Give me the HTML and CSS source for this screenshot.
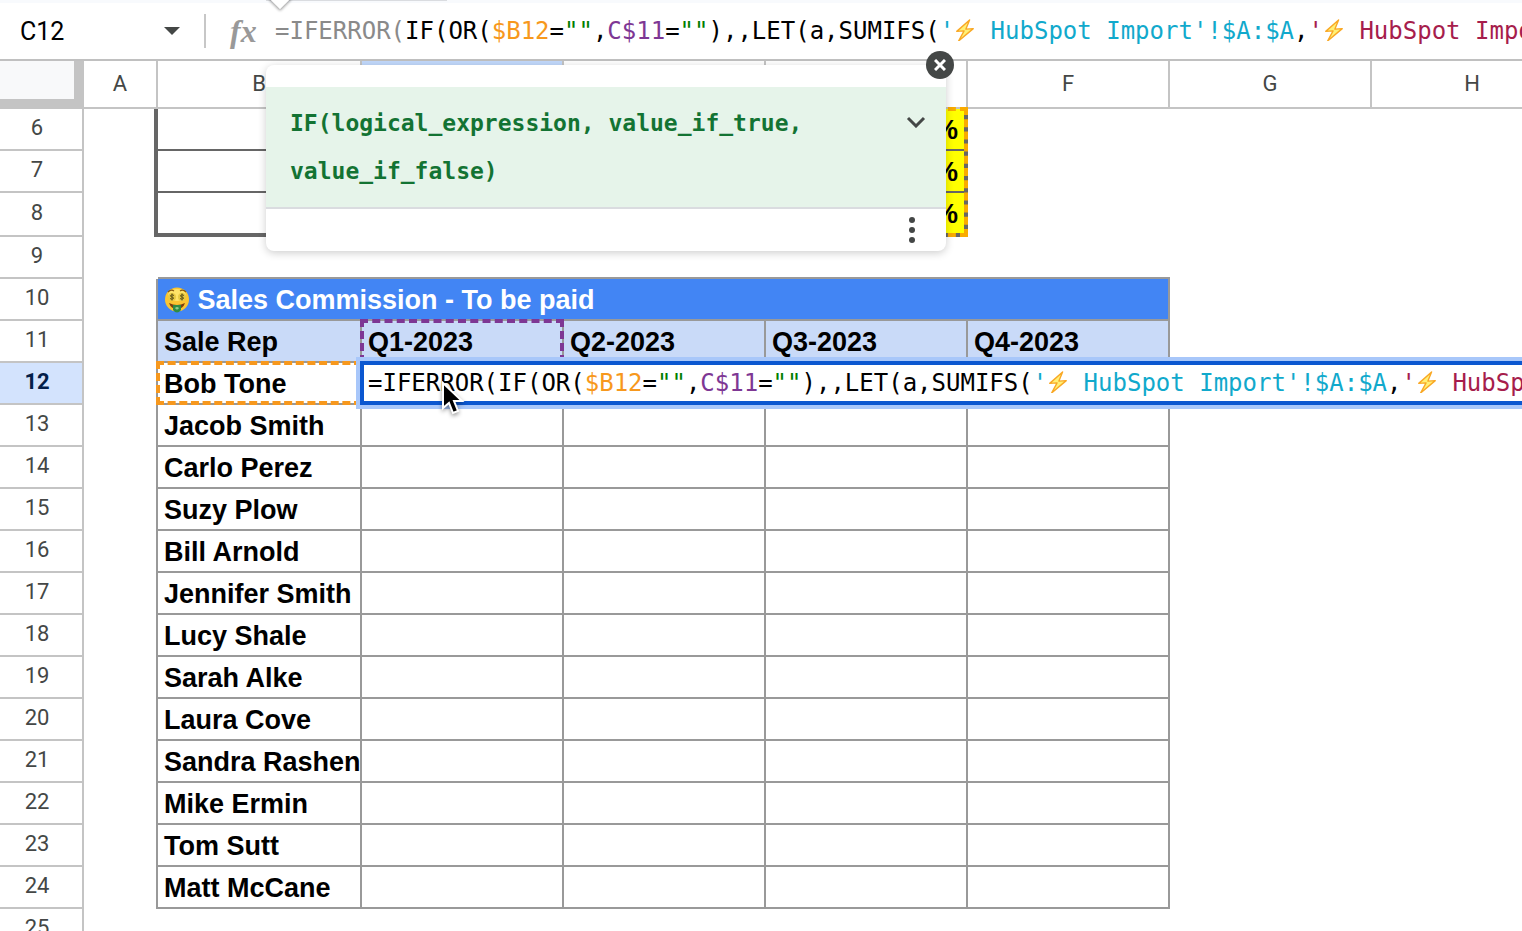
FILE: index.html
```html
<!DOCTYPE html>
<html lang="en">
<head>
    <meta charset="UTF-8">
    <meta name="viewport" content="width=device-width, initial-scale=1.0">
    <title>Sales Commission</title>
    <link rel="stylesheet" href="styles.css">
</head>
<body>
    <svg class="defs" aria-hidden="true">
        <symbol id="bolt" viewBox="0 0 24 24">
            <path d="M17 1 L3 13.500 L11 13 L5 24 L21 10.500 L13 11 Z" fill="#fff176" stroke="#f9a825" stroke-width="1.500" stroke-linejoin="round"/>
        </symbol>
    </svg>

    <div class="formula-bar">
        <input class="name-box" type="text" value="C12" aria-label="Name box">
        <button class="name-arrow" aria-label="Named ranges"></button>
        <span class="divider"></span>
        <i class="fx">fx</i>
        <div class="formula" contenteditable="true" spellcheck="false" role="textbox" aria-label="Formula"><span class="dim">=IFERROR(</span>IF(OR(<span class="ref-orange">$B12</span>=<span class="str">""</span>,<span class="ref-purple">C$11</span>=<span class="str">""</span>),,LET(a,SUMIFS(<span class="ref-cyan">'<svg class="bolt"><use href="#bolt"/></svg> HubSpot Import'!$A:$A</span>,<span class="ref-red">'<svg class="bolt"><use href="#bolt"/></svg> HubSpot Import'</span></div>
    </div>

    <div class="sheet">
        <table>
            <colgroup>
                <col class="col-num">
                <col class="col-a">
                <col class="col-b">
                <col span="6">
            </colgroup>
            <thead>
                <tr>
                    <th class="corner"></th>
                    <th>A</th>
                    <th>B</th>
                    <th class="active">C</th>
                    <th>D</th>
                    <th>E</th>
                    <th>F</th>
                    <th>G</th>
                    <th>H</th>
                </tr>
            </thead>
            <tbody class="rates">
                <tr><th>6</th><td></td><td></td><td></td><td></td><td class="rate">%<span class="range range-rates"></span></td></tr>
                <tr><th>7</th><td></td><td></td><td></td><td></td><td class="rate">%</td></tr>
                <tr class="last"><th>8</th><td></td><td></td><td></td><td></td><td class="rate">%</td></tr>
            </tbody>
            <tbody class="spacer">
                <tr><th>9</th><td></td><td></td><td></td><td></td><td></td><td></td></tr>
            </tbody>
            <tbody class="commission">
                <tr>
                    <th>10</th>
                    <td></td>
                    <td class="title" colspan="5"><svg class="face" viewBox="0 0 26 26" aria-hidden="true">
                        <circle cx="13" cy="12.500" r="12" fill="#fbc531"/>
                        <ellipse cx="13" cy="8" rx="9" ry="6" fill="#ffe368"/>
                        <path d="M4 5 Q7 2 10 4 M16 4 Q19 2 22 5" fill="none" stroke="#8a5a12" stroke-width="1.200"/>
                        <circle cx="8" cy="10" r="4" fill="#e8c944"/>
                        <circle cx="18" cy="10" r="4" fill="#e8c944"/>
                        <path d="M10 8.500 Q8 7 6.500 8.500 Q6.500 10 8 10 Q9.800 10.300 9.500 11.500 Q8 13 6 11.500 M8 6.500 V13.500 M20 8.500 Q18 7 16.500 8.500 Q16.500 10 18 10 Q19.800 10.300 19.500 11.500 Q18 13 16 11.500 M18 6.500 V13.500" fill="none" stroke="#5f5318" stroke-width="1"/>
                        <path d="M5 16 Q13 20 21 16 Q19 22 13 22 Q7 22 5 16 Z" fill="#7b3f10"/>
                        <path d="M9 18 H17 V23 Q13 28 9 23 Z" fill="#2e8b45"/>
                        <path d="M11 21 Q13 19 15 21 Q13 24 11 21" fill="#8fce8f"/>
                    </svg> Sales Commission - To be paid</td>
                </tr>
                <tr class="heads">
                    <th>11</th>
                    <td></td>
                    <td>Sale Rep</td>
                    <td>Q1-2023<span class="range range-purple"></span></td>
                    <td>Q2-2023</td>
                    <td>Q3-2023</td>
                    <td>Q4-2023</td>
                </tr>
                <tr>
                    <th class="active">12</th>
                    <td></td>
                    <td>Bob Tone<span class="range range-orange"></span></td>
                    <td><div class="editor" contenteditable="true" spellcheck="false" role="textbox" aria-label="C12">=IFERROR(IF(OR(<span class="ref-orange">$B12</span>=<span class="str">""</span>,<span class="ref-purple">C$11</span>=<span class="str">""</span>),,LET(a,SUMIFS(<span class="ref-cyan">'<svg class="bolt"><use href="#bolt"/></svg> HubSpot Import'!$A:$A</span>,<span class="ref-red">'<svg class="bolt"><use href="#bolt"/></svg> HubSpot Import'</span></div></td>
                    <td></td>
                    <td></td>
                    <td></td>
                </tr>
                <tr><th>13</th><td></td><td>Jacob Smith</td><td></td><td></td><td></td><td></td></tr>
                <tr><th>14</th><td></td><td>Carlo Perez</td><td></td><td></td><td></td><td></td></tr>
                <tr><th>15</th><td></td><td>Suzy Plow</td><td></td><td></td><td></td><td></td></tr>
                <tr><th>16</th><td></td><td>Bill Arnold</td><td></td><td></td><td></td><td></td></tr>
                <tr><th>17</th><td></td><td>Jennifer Smith</td><td></td><td></td><td></td><td></td></tr>
                <tr><th>18</th><td></td><td>Lucy Shale</td><td></td><td></td><td></td><td></td></tr>
                <tr><th>19</th><td></td><td>Sarah Alke</td><td></td><td></td><td></td><td></td></tr>
                <tr><th>20</th><td></td><td>Laura Cove</td><td></td><td></td><td></td><td></td></tr>
                <tr><th>21</th><td></td><td>Sandra Rashen</td><td></td><td></td><td></td><td></td></tr>
                <tr><th>22</th><td></td><td>Mike Ermin</td><td></td><td></td><td></td><td></td></tr>
                <tr><th>23</th><td></td><td>Tom Sutt</td><td></td><td></td><td></td><td></td></tr>
                <tr><th>24</th><td></td><td>Matt McCane</td><td></td><td></td><td></td><td></td></tr>
            </tbody>
            <tbody>
                <tr><th>25</th></tr>
            </tbody>
        </table>
    </div>

    <!-- value preview above the formula bar, only its bottom edge is in view -->
    <div class="preview"></div>

    <div class="hint">
        <div class="hint-head">
            <code>IF(logical_expression, value_if_true,<br>value_if_false)</code>
            <button class="hint-toggle" aria-label="Expand">
                <svg width="20" height="12" viewBox="0 0 20 12"><path d="M2 2 L10 10 L18 2" fill="none" stroke="#444746" stroke-width="3"/></svg>
            </button>
        </div>
        <div class="hint-foot">
            <button aria-label="More options">
                <svg width="6" height="26" viewBox="0 0 6 26" fill="#444746"><circle cx="3" cy="3" r="3"/><circle cx="3" cy="13" r="3"/><circle cx="3" cy="23" r="3"/></svg>
            </button>
        </div>
        <button class="hint-close" aria-label="Close">
            <svg width="12" height="12" viewBox="0 0 12 12"><path d="M1 1 L11 11 M11 1 L1 11" stroke="#fff" stroke-width="3"/></svg>
        </button>
    </div>

    <svg class="cursor" viewBox="0 0 24 36" aria-hidden="true">
        <path d="M2 2 V27 L8 22 L12 32 L17 30 L13 20 H21 Z" fill="#000" stroke="#fff" stroke-width="2"/>
    </svg>
</body>
</html>
```
FILE: styles.css
```css
* {
    box-sizing: border-box;
}
body {
    position: relative;
    height: 100vh;
    margin: 0;
    overflow: hidden;
    display: flex;
    flex-direction: column;
    background: #fff;
    font-family: Roboto, sans-serif;
}
button {
    padding: 0;
    border: 0;
    background: none;
}
.defs {
    position: absolute;
    width: 0;
    height: 0;
}

/* formula bar */
.formula-bar {
    display: flex;
    align-items: center;
    flex: none;
    height: 61px;
    padding-left: 20px;
    border-top: 3px solid #f8fafd;
    border-bottom: 2px solid #c0c0c0;
    overflow: hidden;
}
.name-box {
    width: 144px;
    padding: 0;
    border: 0;
    outline: 0;
    font: 25px Roboto, sans-serif;
    color: #000;
}
.name-arrow {
    flex: none;
    border: 8px solid transparent;
    border-top-color: #444746;
    border-bottom: 0;
}
.divider {
    flex: none;
    width: 2px;
    height: 34px;
    margin: 0 24px 0 24px;
    background: #c7c7c7;
}
.fx {
    flex: none;
    width: 45px;
    font: italic bold 32px/36px "Liberation Serif", serif;
    color: #999;
}
.formula,
.editor {
    font: 24px/36px "DejaVu Sans Mono", monospace;
    white-space: pre;
    color: #000;
    outline: 0;
}
.bolt {
    width: 22px;
    height: 22px;
    vertical-align: -2px;
}
.dim { color: #8a8a8a; }
.str { color: #008000; }
.ref-orange { color: #f7981d; }
.ref-purple { color: #7e3794; }
.ref-cyan { color: #11a9cc; }
.ref-red { color: #a61d4c; }

/* grid */
.sheet {
    flex: 1;
    overflow: hidden;
}
table {
    width: 1574px;
    table-layout: fixed;
    border-collapse: separate;
    border-spacing: 0;
}
col { width: 202px; }
.col-num { width: 84px; }
.col-a { width: 74px; }
.col-b { width: 204px; }
tr { height: 42px; }
th {
    padding: 0;
    border: solid #c4c4c4;
    border-width: 0 2px 2px 0;
    font-size: 22px;
    line-height: 26px;
    font-weight: normal;
    color: #444746;
}
thead th {
    position: relative;
    z-index: 1;
    height: 48px;
    background: #fff;
}
thead th.active {
    background: #c2d9fc;
}
thead .corner {
    border-width: 0 10px 10px 0;
    background: #f8f9fa;
}
tbody th {
    padding: 0 8px 2px 0;
}
tbody th.active {
    background: #d3e3fd;
    font-weight: bold;
    color: #041e49;
}
td {
    position: relative;
    height: 42px;
    padding: 2px 0 0 6px;
    font: bold 27px/30px "Liberation Sans", Arial, sans-serif;
    white-space: nowrap;
    color: #000;
}
.rates td {
    border-bottom: 2px solid #666;
}
.rates td:nth-child(2) {
    border-right: 4px solid #666;
    border-bottom: 0;
}
.rates .last td {
    height: 44px;
    border-bottom-width: 4px;
}
.rates .last td:nth-child(2) {
    border-bottom: 0;
}
.rates td.rate {
    padding-right: 6px;
    border-right: 4px solid #666;
    background: #ff0;
    text-align: right;
}
.spacer td:nth-child(n+3) {
    border-bottom: 2px solid #999;
}
.commission td {
    border-right: 2px solid #999;
    border-bottom: 2px solid #999;
}
.commission td:nth-child(2) {
    border-bottom: 0;
}
.commission .title {
    background: #4285f4;
    color: #fff;
}
.heads td:nth-child(n+3) {
    background: #c9daf8;
}
.face {
    width: 26px;
    height: 26px;
    vertical-align: -4px;
}

/* dashed outlines of the ranges used in the formula */
.range {
    position: absolute;
    inset: -2px;
    border: 4px dashed;
}
.range-purple { border-color: #7e3794; }
.range-orange { border-color: #f7981d; }
.range-rates {
    inset: -2px -4px auto 0;
    height: 130px;
    z-index: 1;
    border-color: #f9ab00;
}
.editor {
    position: absolute;
    top: -2px;
    left: -2px;
    z-index: 1;
    height: 44px;
    padding-left: 4px;
    border: 4px solid #0b57d0;
    background: #fff;
    box-shadow: 0 0 0 4px #a8c7fa;
}

/* function help */
.preview {
    position: absolute;
    top: 0;
    left: 266px;
    width: 181px;
    height: 1px;
    background: #dadce0;
}
.preview::after {
    content: "";
    position: absolute;
    top: -10px;
    left: 6px;
    width: 16px;
    height: 16px;
    background: #fff;
    box-shadow: 1px 1px 3px rgba(0,0,0,0.4);
    transform: rotate(45deg);
}
.hint {
    position: absolute;
    top: 65px;
    left: 266px;
    z-index: 2;
    width: 680px;
    padding-top: 22px;
    border-radius: 8px;
    background: #fff;
    box-shadow: 0 2px 8px rgba(0,0,0,0.2);
}
.hint-head {
    display: flex;
    justify-content: space-between;
    align-items: flex-start;
    padding: 12px 20px 12px 24px;
    border-bottom: 2px solid #dadce0;
    background: #e6f4ea;
}
.hint-head code {
    font: bold 23px/48px "DejaVu Sans Mono", monospace;
    color: #137333;
}
.hint-toggle {
    height: 46px;
}
.hint-foot {
    display: flex;
    justify-content: flex-end;
    align-items: center;
    height: 42px;
    padding-right: 31px;
}
.hint svg {
    display: block;
}
.hint-close {
    position: absolute;
    top: -14px;
    right: -8px;
    display: flex;
    align-items: center;
    justify-content: center;
    width: 28px;
    height: 28px;
    border-radius: 50%;
    background: #444746;
}
.cursor {
    position: absolute;
    top: 381px;
    left: 441px;
    z-index: 3;
    width: 24px;
    height: 36px;
    filter: drop-shadow(0 2px 2px rgba(0,0,0,0.4));
}
```
